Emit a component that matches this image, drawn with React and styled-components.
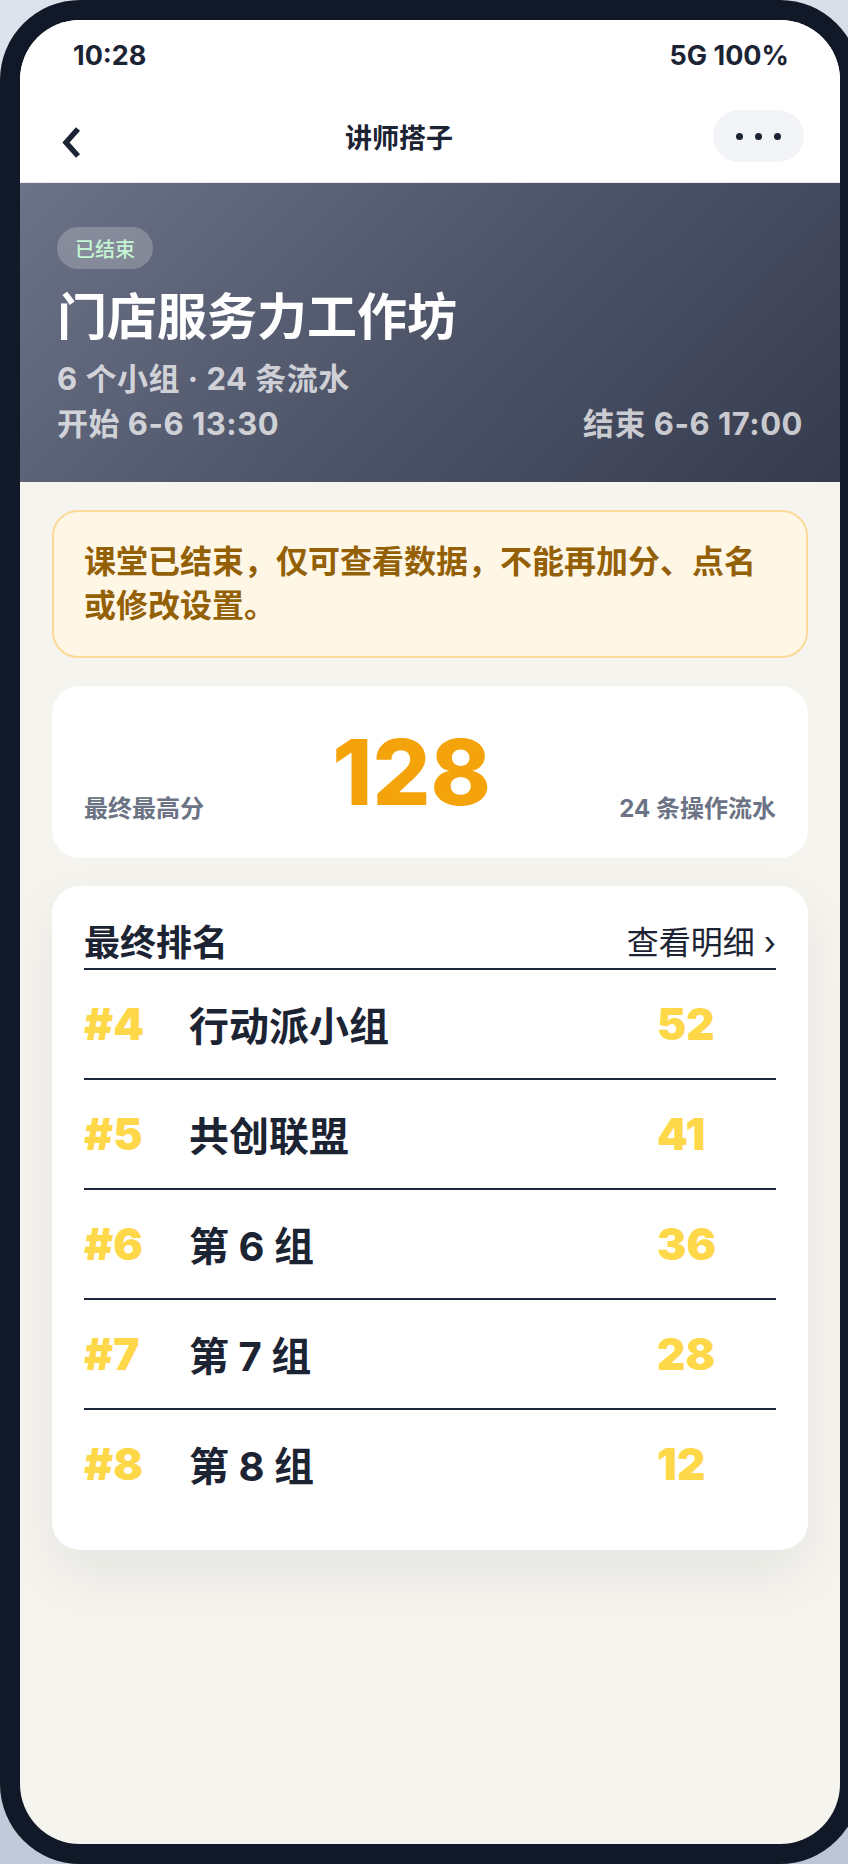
import React from 'react'
import styled, { createGlobalStyle } from 'styled-components'

const GlobalStyle = createGlobalStyle`
  * { box-sizing: border-box; }
  html, body {
    margin: 0;
    padding: 0;
    overflow: hidden;
  }
  body {
    background: linear-gradient(160deg, #dde3ec 0%, #bcc6d6 100%);
    font-family: Inter, "Noto Sans CJK SC", sans-serif;
    color: #1c2434;
  }
`

const rankings = [
  { rank: 4, name: '行动派小组', score: 52 },
  { rank: 5, name: '共创联盟', score: 41 },
  { rank: 6, name: '第 6 组', score: 36 },
  { rank: 7, name: '第 7 组', score: 28 },
  { rank: 8, name: '第 8 组', score: 12 },
]

export default function App() {
  return (
    <>
      <GlobalStyle />
      <Phone>
        <Screen>
          <StatusBar>
            <span>10:28</span>
            <span>5G 100%</span>
          </StatusBar>

          <NavBar>
            <BackButton aria-label="返回">
              <svg width="20" height="31" viewBox="0 0 20 31">
                <polyline points="17,2 5,15.5 17,29" fill="none" stroke="#1c2434" strokeWidth="5.5" />
              </svg>
            </BackButton>
            <NavTitle>讲师搭子</NavTitle>
            <MoreButton aria-label="更多">
              <Dot /><Dot /><Dot />
            </MoreButton>
          </NavBar>

          <Hero>
            <Badge>已结束</Badge>
            <HeroTitle>门店服务力工作坊</HeroTitle>
            <HeroMeta>6 个小组 · 24 条流水</HeroMeta>
            <TimeRow>
              <span>开始 6-6 13:30</span>
              <span>结束 6-6 17:00</span>
            </TimeRow>
          </Hero>

          <Content>
            <Notice>课堂已结束，仅可查看数据，不能再加分、点名或修改设置。</Notice>

            <ScoreCard>
              <ScoreLabel>最终最高分</ScoreLabel>
              <BigScore>128</BigScore>
              <ScoreLabel>24 条操作流水</ScoreLabel>
            </ScoreCard>

            <RankCard>
              <RankHeader>
                <CardTitle>最终排名</CardTitle>
                <DetailLink>查看明细 ›</DetailLink>
              </RankHeader>
              {rankings.map((r) => (
                <RankRow key={r.rank}>
                  <RankNo>#{r.rank}</RankNo>
                  <GroupName>{r.name}</GroupName>
                  <GroupScore>{r.score}</GroupScore>
                </RankRow>
              ))}
            </RankCard>
          </Content>
        </Screen>
      </Phone>
    </>
  )
}

const Phone = styled.div`
  width: 860px;
  height: 1864px;
  padding: 20px;
  background: #111827;
  border-radius: 80px;
`

const Screen = styled.div`
  height: 100%;
  display: flex;
  flex-direction: column;
  background: #f5f4ef;
  border-radius: 60px;
  overflow: hidden;
`

const StatusBar = styled.div`
  height: 70px;
  padding: 0 51px 0 53px;
  display: flex;
  align-items: center;
  justify-content: space-between;
  background: #fff;
  font-size: 27px;
  font-weight: 700;
  color: #1c2434;
`

const NavBar = styled.div`
  height: 93px;
  padding: 0 36px;
  display: flex;
  align-items: center;
  background: #fff;
  border-bottom: 1px solid #e7e9ee;
`

const BackButton = styled.div`
  width: 29px;
  margin-top: 12px;
  display: flex;
  align-items: center;
  justify-content: center;
`

const NavTitle = styled.div`
  flex: 1;
  text-align: center;
  font-size: 27px;
  font-weight: 700;
  color: #1c2434;
`

const MoreButton = styled.div`
  width: 91px;
  height: 52px;
  border-radius: 26px;
  background: #f3f4f7;
  display: flex;
  align-items: center;
  justify-content: center;
  gap: 12px;
`

const Dot = styled.span`
  width: 7px;
  height: 7px;
  border-radius: 50%;
  background: #1c2434;
`

const Hero = styled.div`
  padding: 44px 37px 38px;
  background: linear-gradient(135deg, #6c7287 0%, #4f5569 50%, #363c4e 100%);
  color: #fff;
`

const Badge = styled.div`
  display: inline-flex;
  align-items: center;
  height: 42px;
  padding: 0 18px;
  border-radius: 21px;
  background: rgba(255, 255, 255, 0.22);
  color: #c4f5d2;
  font-size: 20px;
  font-weight: 500;
`

const HeroTitle = styled.div`
  margin-top: 18px;
  font-size: 50px;
  line-height: 60px;
  font-weight: 700;
`

const HeroMeta = styled.div`
  margin-top: 12px;
  font-size: 31px;
  line-height: 40px;
  letter-spacing: 0.5px;
  font-weight: 700;
  color: rgba(255, 255, 255, 0.74);
`

const TimeRow = styled(HeroMeta)`
  margin-top: 5px;
  display: flex;
  justify-content: space-between;
`

const Content = styled.div`
  flex: 1;
  padding: 28px 32px;
  display: flex;
  flex-direction: column;
  gap: 28px;
`

const Notice = styled.div`
  padding: 28px 30px;
  border: 2px solid #fcd999;
  border-radius: 26px;
  background: #fff7e6;
  color: #946006;
  font-size: 32px;
  line-height: 44px;
  font-weight: 700;
`

const ScoreCard = styled.div`
  padding: 32px;
  border-radius: 28px;
  background: #fff;
  display: flex;
  justify-content: space-between;
  align-items: flex-end;
`

const ScoreLabel = styled.div`
  margin-bottom: 2px;
  font-size: 24px;
  line-height: 30px;
  font-weight: 700;
  color: #6b7385;
`

const BigScore = styled.div`
  font-size: 91px;
  line-height: 108px;
  font-weight: 800;
  color: #f5a30a;
`

const RankCard = styled.div`
  padding: 32px;
  border-radius: 28px;
  background: #fff;
  box-shadow: 0 24px 60px rgba(17, 24, 39, 0.07);
`

const RankHeader = styled.div`
  height: 52px;
  display: flex;
  align-items: center;
  justify-content: space-between;
  border-bottom: 2px solid #1e293b;
`

const CardTitle = styled.div`
  font-size: 36px;
  line-height: 50px;
  font-weight: 700;
  color: #1c2434;
`

const DetailLink = styled.div`
  font-size: 32px;
  line-height: 50px;
  font-weight: 400;
  color: #1c2434;
`

const RankRow = styled.div`
  height: 110px;
  display: grid;
  grid-template-columns: 105px 1fr 119px;
  align-items: center;
  border-bottom: 2px solid #1e293b;

  &:last-child {
    height: 108px;
    border-bottom: none;
  }
`

const RankNo = styled.div`
  font-size: 44px;
  font-weight: 900;
  color: #ffd84a;
`

const GroupName = styled.div`
  font-size: 40px;
  font-weight: 700;
  color: #1c2434;
`

const GroupScore = styled(RankNo)``
